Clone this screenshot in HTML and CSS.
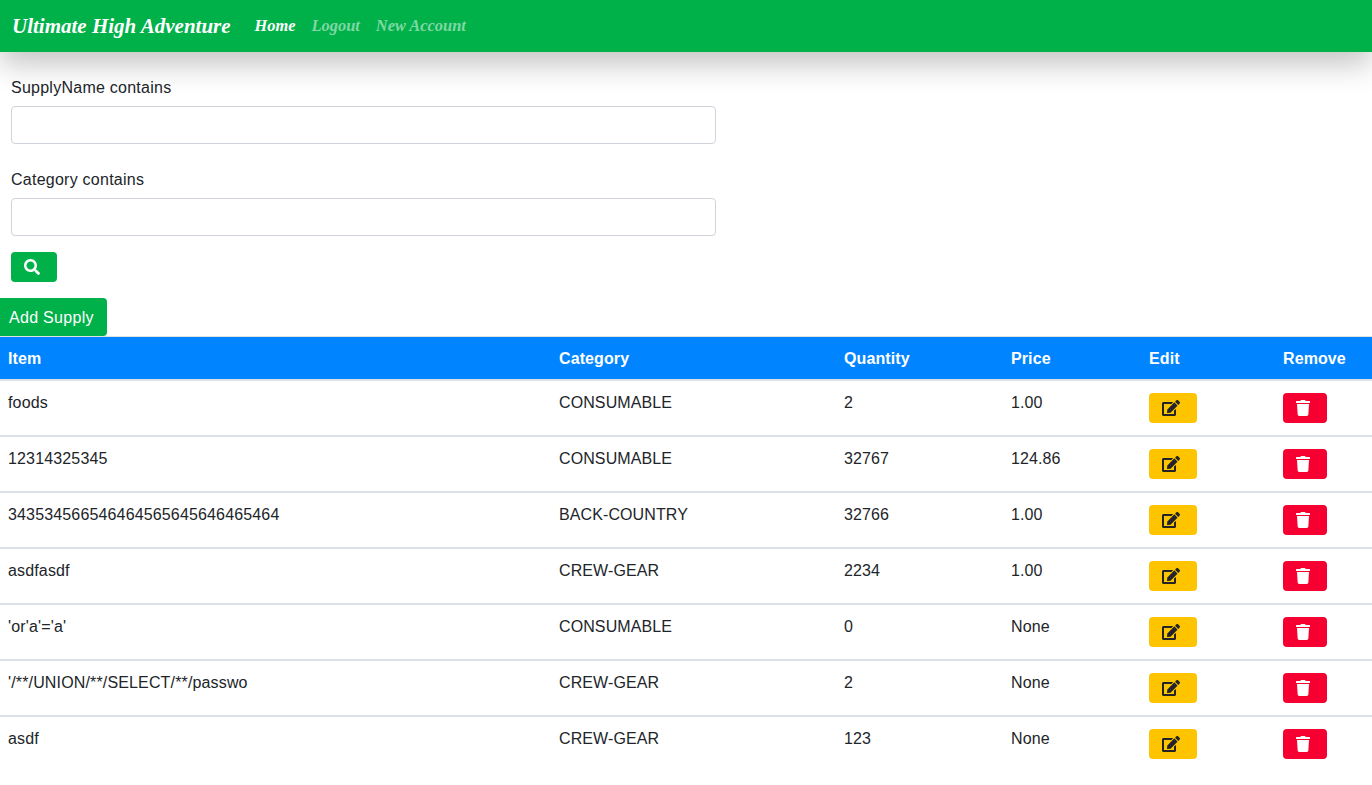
FILE: index.html
```html
<!DOCTYPE html>
<html lang="en">
<head>
<meta charset="utf-8">
<title>Ultimate High Adventure</title>
<link rel="stylesheet" href="styles.css">
</head>
<body>
<svg class="defs" aria-hidden="true">
  <defs>
    <path id="edit" d="M402.600 83.200l90.200 90.200c3.800 3.800 3.800 10 0 13.800L274.400 405.600l-92.800 10.300c-12.400 1.400-22.900-9.100-21.500-21.500l10.300-92.800L388.800 83.200c3.800-3.800 10-3.800 13.800 0zm162-22.900l-48.800-48.800c-15.200-15.200-39.900-15.200-55.200 0l-35.400 35.400c-3.800 3.800-3.800 10 0 13.800l90.200 90.200c3.800 3.800 10 3.800 13.800 0l35.400-35.400c15.200-15.300 15.200-40 0-55.200zM384 346.200V448H64V128h229.800c3.200 0 6.200-1.300 8.500-3.500l40-40c7.600-7.600 2.200-20.500-8.500-20.500H48C21.500 64 0 85.500 0 112v352c0 26.500 21.500 48 48 48h352c26.500 0 48-21.500 48-48V306.200c0-10.700-12.900-16-20.500-8.500l-40 40c-2.200 2.300-3.500 5.300-3.500 8.500z"/>
    <path id="trash" d="M432 32H312l-9.400-18.700A24 24 0 0 0 281.100 0H166.800a23.720 23.720 0 0 0-21.400 13.300L136 32H16A16 16 0 0 0 0 48v32a16 16 0 0 0 16 16h416a16 16 0 0 0 16-16V48a16 16 0 0 0-16-16zM53.200 467a48 48 0 0 0 47.900 45h245.800a48 48 0 0 0 47.900-45L416 128H32z"/>
  </defs>
</svg>
<nav class="navbar">
  <a class="brand" href="#">Ultimate High Adventure</a>
  <a class="nav-link active" href="#">Home</a>
  <a class="nav-link" href="#">Logout</a>
  <a class="nav-link" href="#">New Account</a>
</nav>
<form class="filters">
  <div class="field">
    <label class="field-label">SupplyName contains</label>
    <input class="field-input" type="text">
  </div>
  <div class="field">
    <label class="field-label">Category contains</label>
    <input class="field-input" type="text">
  </div>
  <button class="btn btn-search" type="button" aria-label="Search">
    <svg class="icon-search" viewBox="0 0 512 512"><path fill="currentColor" d="M505 442.700L405.300 343c-4.500-4.500-10.600-7-17-7H372c27.600-35.300 44-79.700 44-128C416 93.100 322.900 0 208 0S0 93.100 0 208s93.100 208 208 208c48.300 0 92.700-16.400 128-44v16.300c0 6.400 2.500 12.500 7 17l99.700 99.700c9.400 9.400 24.600 9.400 33.900 0l28.300-28.300c9.400-9.400 9.400-24.600.1-34zM208 336c-70.700 0-128-57.200-128-128 0-70.700 57.200-128 128-128 70.700 0 128 57.200 128 128 0 70.700-57.200 128-128 128z"/></svg>
  </button>
</form>
<button class="btn btn-add" type="button">Add Supply</button>
<table class="table">
  <thead>
    <tr><th class="c-item">Item</th><th class="c-cat">Category</th><th class="c-qty">Quantity</th><th class="c-price">Price</th><th class="c-edit">Edit</th><th class="c-rem">Remove</th></tr>
  </thead>
  <tbody>
    <tr><td class="cell-item">foods</td><td>CONSUMABLE</td><td>2</td><td>1.00</td><td><button class="btn btn-edit" type="button"><svg class="icon-edit" viewBox="0 0 576 512"><use href="#edit"/></svg></button></td><td><button class="btn btn-del" type="button"><svg class="icon-trash" viewBox="0 0 448 512"><use href="#trash"/></svg></button></td></tr>
    <tr><td class="cell-item">12314325345</td><td>CONSUMABLE</td><td>32767</td><td>124.86</td><td><button class="btn btn-edit" type="button"><svg class="icon-edit" viewBox="0 0 576 512"><use href="#edit"/></svg></button></td><td><button class="btn btn-del" type="button"><svg class="icon-trash" viewBox="0 0 448 512"><use href="#trash"/></svg></button></td></tr>
    <tr><td class="cell-item">343534566546464565645646465464</td><td>BACK-COUNTRY</td><td>32766</td><td>1.00</td><td><button class="btn btn-edit" type="button"><svg class="icon-edit" viewBox="0 0 576 512"><use href="#edit"/></svg></button></td><td><button class="btn btn-del" type="button"><svg class="icon-trash" viewBox="0 0 448 512"><use href="#trash"/></svg></button></td></tr>
    <tr><td class="cell-item">asdfasdf</td><td>CREW-GEAR</td><td>2234</td><td>1.00</td><td><button class="btn btn-edit" type="button"><svg class="icon-edit" viewBox="0 0 576 512"><use href="#edit"/></svg></button></td><td><button class="btn btn-del" type="button"><svg class="icon-trash" viewBox="0 0 448 512"><use href="#trash"/></svg></button></td></tr>
    <tr><td class="cell-item">'or'a'='a'</td><td>CONSUMABLE</td><td>0</td><td>None</td><td><button class="btn btn-edit" type="button"><svg class="icon-edit" viewBox="0 0 576 512"><use href="#edit"/></svg></button></td><td><button class="btn btn-del" type="button"><svg class="icon-trash" viewBox="0 0 448 512"><use href="#trash"/></svg></button></td></tr>
    <tr><td class="cell-item">'/**/UNION/**/SELECT/**/passwo</td><td>CREW-GEAR</td><td>2</td><td>None</td><td><button class="btn btn-edit" type="button"><svg class="icon-edit" viewBox="0 0 576 512"><use href="#edit"/></svg></button></td><td><button class="btn btn-del" type="button"><svg class="icon-trash" viewBox="0 0 448 512"><use href="#trash"/></svg></button></td></tr>
    <tr class="row-last"><td class="cell-item">asdf</td><td>CREW-GEAR</td><td>123</td><td>None</td><td><button class="btn btn-edit" type="button"><svg class="icon-edit" viewBox="0 0 576 512"><use href="#edit"/></svg></button></td><td><button class="btn btn-del" type="button"><svg class="icon-trash" viewBox="0 0 448 512"><use href="#trash"/></svg></button></td></tr>
  </tbody>
</table>
</body>
</html>
```
FILE: styles.css
```css
* { box-sizing: border-box; }
html, body { margin: 0; padding: 0; }
body {
  font-family: "Liberation Sans", Arial, sans-serif;
  font-size: 16px;
  line-height: 24px;
  letter-spacing: 0.1px;
  color: #212529;
  background: #fff;
}
.defs { position: absolute; width: 0; height: 0; }
.navbar {
  display: flex;
  align-items: center;
  height: 52px;
  padding: 0 12px;
  background: #00b14a;
  box-shadow: 0 12px 30px rgba(0, 0, 0, 0.24);
  position: relative;
}
.brand, .nav-link {
  font-family: cursive, "Liberation Serif", serif;
  font-style: italic;
  font-weight: 700;
  letter-spacing: 0;
  text-decoration: none;
  white-space: nowrap;
}
.brand { color: #fff; font-size: 21px; margin-right: 24px; }
.nav-link { color: rgba(255, 255, 255, 0.5); font-size: 16.4px; margin-right: 16px; }
.nav-link.active { color: #fff; }
.filters { padding: 24px 11px 0; }
.field { margin-bottom: 24px; }
.field:last-of-type { margin-bottom: 16px; }
.field-label { display: block; margin-bottom: 6px; letter-spacing: 0.25px; }
.field-input {
  display: block;
  width: 705px;
  height: 38px;
  border: 1px solid #ced4da;
  border-radius: 4px;
  background: #fff;
}
.btn {
  display: flex;
  align-items: center;
  justify-content: center;
  border: 0;
  border-radius: 4px;
  padding: 0 4px 0 0;
  font: inherit;
  color: #fff;
}
.btn-search { width: 46px; height: 30px; background: #00b14a; }
.icon-search { width: 16px; height: 16px; }
.btn-add {
  justify-content: flex-start;
  width: 107px;
  height: 38px;
  margin-top: 16px;
  padding: 2px 0 0 9px;
  border-radius: 0 4px 4px 0;
  background: #00b14a;
  letter-spacing: 0.3px;
}
.table {
  width: 1372px;
  border-collapse: separate;
  border-spacing: 0;
  table-layout: fixed;
  border-top: 1px solid #dee2e6;
}
.table th {
  height: 44px;
  padding: 2px 8px 0;
  background: #0084ff;
  color: #fff;
  font-weight: 700;
  text-align: left;
  border-bottom: 2px solid #dee2e6;
}
.table td {
  height: 56px;
  padding: 10px 8px 0;
  vertical-align: top;
  border-bottom: 2px solid #dee2e6;
}
.table td.cell-item { letter-spacing: 0.15px; }
.table .row-last td { border-bottom: 0; }
.c-item { width: 551px; }
.c-cat { width: 285px; }
.c-qty { width: 167px; }
.c-price { width: 138px; }
.c-edit { width: 134px; }
.c-rem { width: 97px; }
.table td .btn { height: 30px; margin-top: 2px; }
.btn-edit { width: 48px; background: #ffc400; color: #212529; }
.btn-del { width: 44px; background: #f50031; color: #fff; }
.icon-edit { width: 18px; height: 16px; fill: currentColor; }
.icon-trash { width: 14px; height: 16px; fill: currentColor; }
```
